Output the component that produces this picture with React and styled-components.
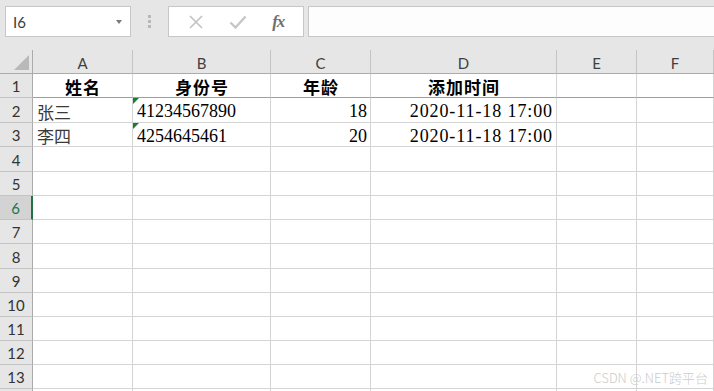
import React from "react";
import styled, { createGlobalStyle } from "styled-components";

const GlobalStyle = createGlobalStyle`
  html, body {
    margin: 0;
    padding: 0;
    background: #ffffff;
    overflow: hidden;
  }
  * { box-sizing: border-box; }
`;

const Page = styled.div`
  position: relative;
  width: 714px;
  height: 391px;
  overflow: hidden;
  background: #ffffff;
  font-family: Lato, "Noto Sans", sans-serif;
`;

const Toolbar = styled.div`
  display: flex;
  align-items: flex-start;
  height: 50px;
  padding: 6px 0 0 5px;
  background: #e6e6e6;
`;

const NameBox = styled.div`
  display: flex;
  align-items: center;
  justify-content: space-between;
  width: 126px;
  height: 31px;
  padding: 0 8px 0 7px;
  background: #ffffff;
  border: 1px solid #c6c6c6;
  font-size: 15px;
  color: #3c3c3c;
`;

const Caret = styled.span`
  width: 0;
  height: 0;
  border-left: 3.5px solid transparent;
  border-right: 3.5px solid transparent;
  border-top: 4px solid #7a7a7a;
`;

const Grip = styled.div`
  display: flex;
  flex-direction: column;
  gap: 2px;
  margin: 9px 17px 0 17px;
`;

const GripDot = styled.span`
  width: 3px;
  height: 3px;
  background: #b8b8b8;
`;

const FxButtons = styled.div`
  display: flex;
  align-items: center;
  justify-content: space-around;
  width: 136px;
  height: 31px;
  padding: 0 6px;
  background: #ffffff;
  border: 1px solid #c6c6c6;
`;

const FxLabel = styled.span`
  font-family: "Liberation Serif", serif;
  font-style: italic;
  font-weight: 700;
  font-size: 17px;
  color: #707070;
  letter-spacing: -1px;
`;

const FormulaInput = styled.div`
  flex: 1;
  height: 31px;
  margin: 0 -2px 0 4px;
  background: #fdfdfd;
  border: 1px solid #c6c6c6;
`;

const Row = styled.div`
  display: grid;
  grid-template-columns: 33px 100px 138px 100px 186px 80px 1fr;
  height: ${(p) => p.$h}px;
`;

const ColHead = styled.div`
  display: flex;
  align-items: center;
  justify-content: center;
  background: #e6e6e6;
  border-right: 1px solid #c4c4c4;
  border-bottom: 1px solid #ababab;
  font-size: 15px;
  color: #3f3f3f;
  padding-top: 2px;
`;

const Corner = styled(ColHead)`
  position: relative;
  border-right: 1px solid #ababab;
`;

const SelectAll = styled.span`
  position: absolute;
  right: 3px;
  bottom: 3px;
  width: 0;
  height: 0;
  border-left: 15px solid transparent;
  border-bottom: 15px solid #b9b9b9;
`;

const RowHead = styled.div`
  display: flex;
  align-items: center;
  justify-content: center;
  background: ${(p) => (p.$active ? "#d3d3d3" : "#e6e6e6")};
  color: ${(p) => (p.$active ? "#217346" : "#333333")};
  border-right: ${(p) => (p.$active ? "2px solid #217346" : "1px solid #ababab")};
  border-bottom: 1px solid #c4c4c4;
  font-size: 15px;
  padding-top: 1px;
`;

const Cell = styled.div`
  position: relative;
  display: flex;
  align-items: center;
  justify-content: ${(p) =>
    p.$align === "center" ? "center" : p.$align === "right" ? "flex-end" : "flex-start"};
  padding: 2px 3px 0 4px;
  border-right: 1px solid #d4d4d4;
  border-bottom: 1px solid ${(p) => (p.$strong ? "#9e9e9e" : "#d4d4d4")};
  white-space: nowrap;
  overflow: hidden;
  color: #222222;
`;

const CnText = styled.span`
  font-family: "Noto Sans CJK SC", sans-serif;
  font-size: 17px;
  font-weight: ${(p) => (p.$bold ? 700 : 400)};
  color: ${(p) => (p.$bold ? "#000000" : "#3a3a3a")};
  letter-spacing: ${(p) => (p.$bold ? "1px" : "0")};
  line-height: 1;
`;

const NumText = styled.span`
  font-family: "Liberation Serif", serif;
  font-size: 18px;
  color: #000000;
  letter-spacing: ${(p) => (p.$spaced ? "0.9px" : "0")};
  line-height: 1;
`;

const TextFlag = styled.span`
  position: absolute;
  left: 0;
  top: 0;
  width: 0;
  height: 0;
  border-top: 6px solid #1e7b34;
  border-right: 6px solid transparent;
`;

const Watermark = styled.div`
  position: absolute;
  right: 6px;
  bottom: 4px;
  font-family: "Noto Sans CJK SC", sans-serif;
  font-size: 13px;
  font-weight: 300;
  color: #cbcbcb;
`;

const columns = ["A", "B", "C", "D", "E", "F"];
// row heights in px; the last one is the sliver of row 14 at the bottom edge
const heights = [24, 25, 24, 25, 24, 24, 24, 25, 24, 24, 24, 24, 24, 6];

const data = [
  [
    { t: "姓名", cn: true, bold: true, align: "center" },
    { t: "身份号", cn: true, bold: true, align: "center" },
    { t: "年龄", cn: true, bold: true, align: "center" },
    { t: "添加时间", cn: true, bold: true, align: "center" },
  ],
  [
    { t: "张三", cn: true },
    { t: "41234567890", flag: true },
    { t: "18", align: "right" },
    { t: "2020-11-18 17:00", align: "right", spaced: true },
  ],
  [
    { t: "李四", cn: true },
    { t: "4254645461", flag: true },
    { t: "20", align: "right" },
    { t: "2020-11-18 17:00", align: "right", spaced: true },
  ],
];

function CrossIcon() {
  return (
    <svg width="16" height="16" viewBox="0 0 16 16">
      <path d="M2 2 L14 14 M14 2 L2 14" stroke="#c2c2c2" strokeWidth="1.6" fill="none" />
    </svg>
  );
}

function CheckIcon() {
  return (
    <svg width="18" height="16" viewBox="0 0 18 16">
      <path d="M1.5 8.5 L6.5 13.5 L16.5 2.5" stroke="#c6c6c6" strokeWidth="2.4" fill="none" />
    </svg>
  );
}

function App() {
  return (
    <Page>
      <GlobalStyle />
      <Toolbar>
        <NameBox>
          <span>I6</span>
          <Caret />
        </NameBox>
        <Grip>
          <GripDot />
          <GripDot />
          <GripDot />
        </Grip>
        <FxButtons>
          <CrossIcon />
          <CheckIcon />
          <FxLabel>fx</FxLabel>
        </FxButtons>
        <FormulaInput />
      </Toolbar>

      <Row $h={24}>
        <Corner>
          <SelectAll />
        </Corner>
        {columns.map((c) => (
          <ColHead key={c}>{c}</ColHead>
        ))}
      </Row>

      {heights.map((h, i) => {
        const cells = data[i] || [];
        const last = i === heights.length - 1;
        return (
          <Row key={i} $h={h}>
            <RowHead $active={i === 5}>{last ? "" : i + 1}</RowHead>
            {columns.map((c, j) => {
              const cell = cells[j];
              return (
                <Cell key={c} $align={cell && cell.align} $strong={i === 0}>
                  {cell && cell.flag && <TextFlag />}
                  {cell &&
                    (cell.cn ? (
                      <CnText $bold={cell.bold}>{cell.t}</CnText>
                    ) : (
                      <NumText $spaced={cell.spaced}>{cell.t}</NumText>
                    ))}
                </Cell>
              );
            })}
          </Row>
        );
      })}

      <Watermark>CSDN @.NET跨平台</Watermark>
    </Page>
  );
}

export default App;
